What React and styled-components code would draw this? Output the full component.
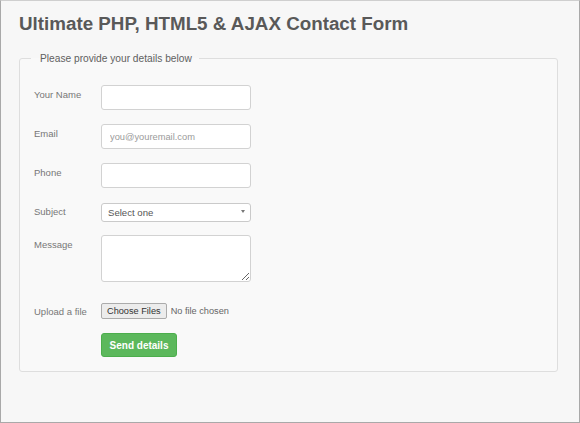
import React from 'react';
import styled, { createGlobalStyle } from 'styled-components'

const Global = createGlobalStyle`
  html, body {
    margin: 0;
    padding: 0;
    background: #f7f7f7;
  }
  * { box-sizing: border-box; }
`

const Page = styled.div`
  width: 580px;
  height: 423px;
  border: 1px solid #a9a9a9;
  border-top-color: #cfcfcf;
  background: #f7f7f7;
  padding: 11px 21px 0 18px;
  font-family: "Liberation Sans", Arial, sans-serif;
`

const Title = styled.h1`
  margin: 0 0 17px;
  font-size: 18.8px;
  line-height: 24px;
  font-weight: bold;
  color: #595959;
`

const Fieldset = styled.fieldset`
  margin: 0;
  padding: 14px 14px 14px;
  border: 1px solid #dedede;
  border-radius: 3px;
  background: #f9f9f9;
`

const Legend = styled.legend`
  margin-left: -3px;
  padding: 0 7px 0 9px;
  font-size: 10.2px;
  color: #606060;
`

const Rows = styled.div`
  display: flex;
  flex-direction: column;
  gap: 14px;
`

const Row = styled.div`
  display: flex;
  align-items: ${props => (props.center ? 'center' : 'flex-start')};
  margin-top: ${props => props.top || 0}px;
`

const Label = styled.label`
  width: 67px;
  flex: none;
  padding-top: ${props => (props.center ? 0 : 3)}px;
  font-size: 9.5px;
  line-height: 13px;
  color: #777;
`

const Input = styled.input`
  width: 150px;
  height: 25px;
  padding: 0 8px;
  border: 1px solid #d2d2d2;
  border-radius: 3px;
  background: #fff;
  font-family: inherit;
  font-size: 9.3px;
  color: #555;
  outline: none;

  &::placeholder { color: #9a9a9a; }
`

const SelectBox = styled.div`
  position: relative;
  width: 150px;

  &::after {
    content: '';
    position: absolute;
    right: 6px;
    top: 8px;
    border-left: 2.5px solid transparent;
    border-right: 2.5px solid transparent;
    border-top: 3px solid #777;
  }
`

const Select = styled.select`
  appearance: none;
  width: 150px;
  height: 19px;
  padding: 0 6px;
  border: 1px solid #cacaca;
  border-radius: 3px;
  background: #fff;
  font-family: inherit;
  font-size: 9.6px;
  color: #555;
  outline: none;
`

const TextArea = styled.textarea`
  width: 150px;
  height: 47px;
  border: 1px solid #d2d2d2;
  border-radius: 3px;
  background: #fff;
  outline: none;
  resize: both;
`

const FileInput = styled.input`
  font-family: inherit;
  font-size: 9.2px;
  color: #666;

  &::file-selector-button {
    height: 16px;
    margin-right: 4px;
    padding: 0 5px;
    border: 1px solid #ababab;
    border-radius: 2px;
    background: #ececec;
    font-family: inherit;
    font-size: 9.2px;
    color: #333;
  }
`

const SendButton = styled.button`
  width: 76px;
  height: 24px;
  margin-left: 67px;
  border: 1px solid #4cae4c;
  border-radius: 3px;
  background: #5cb85c;
  color: #fff;
  font-family: inherit;
  font-size: 10px;
  font-weight: bold;
`

function App () {
  return (
    <Page>
      <Global />
      <Title>Ultimate PHP, HTML5 &amp; AJAX Contact Form</Title>
      <Fieldset>
        <Legend>Please provide your details below</Legend>
        <Rows>
          <Row top={7}>
            <Label>Your Name</Label>
            <Input type="text" />
          </Row>
          <Row>
            <Label>Email</Label>
            <Input type="email" placeholder="you@youremail.com" />
          </Row>
          <Row>
            <Label>Phone</Label>
            <Input type="text" />
          </Row>
          <Row>
            <Label>Subject</Label>
            <SelectBox>
              <Select defaultValue="">
                <option value="">Select one</option>
              </Select>
            </SelectBox>
          </Row>
          <Row top={-1}>
            <Label>Message</Label>
            <TextArea />
          </Row>
          <Row center top={7}>
            <Label center>Upload a file</Label>
            <FileInput type="file" multiple />
          </Row>
          <Row>
            <SendButton type="button">Send details</SendButton>
          </Row>
        </Rows>
      </Fieldset>
    </Page>
  )
}

export default App;
